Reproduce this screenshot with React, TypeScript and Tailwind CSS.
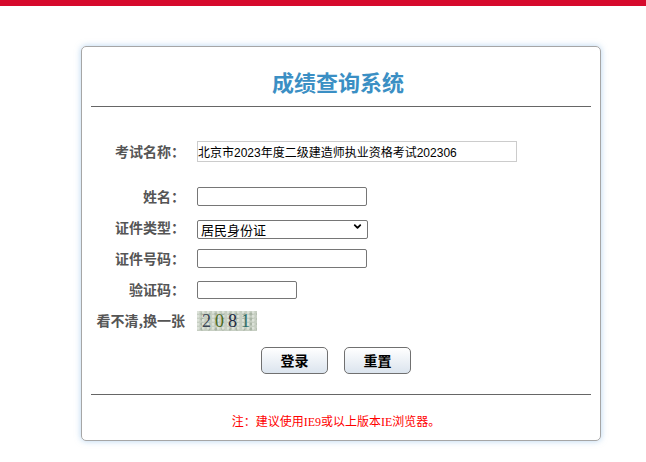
import { ChevronDown } from "lucide-react";

const labelCls = "w-[94px] shrink-0 text-right text-[14px] font-bold text-[#555]";

const Row = ({
  label,
  children,
}: {
  label: string;
  children: React.ReactNode;
}) => (
  <div className="flex h-[31px] items-center">
    <div className={labelCls}>{label}</div>
    <div className="ml-[12px] flex items-center">{children}</div>
  </div>
);

const Captcha = () => (
  <div
    className="flex h-[20px] w-[60px] items-center justify-center bg-[#c6cec2] pl-[2px] text-[18px] leading-none tracking-[4px]"
    style={{
      fontFamily: '"Liberation Serif", serif',
      backgroundImage:
        "radial-gradient(circle at 20% 30%, #dce2d9 1px, transparent 2px), radial-gradient(circle at 70% 60%, #a9b4a5 1px, transparent 2px)",
      backgroundSize: "5px 4px, 7px 5px",
    }}
  >
    <span className="text-[#3a4654]">2</span>
    <span className="text-[#4f6a1e]">0</span>
    <span className="text-[#1e2a44]">8</span>
    <span className="text-[#2b6e6a]">1</span>
  </div>
);

const Btn = ({ text }: { text: string }) => (
  <button className="h-[27px] w-[67px] rounded-[5px] border border-[#707070] bg-gradient-to-b from-white to-[#dbe4ee] text-[14px] font-bold text-black">
    {text}
  </button>
);

export default function App() {
  return (
    <div
      className="min-h-[462px] w-full bg-white"
      style={{ fontFamily: '"Noto Sans CJK SC", "Liberation Sans", sans-serif' }}
    >
      <div className="h-[6px] w-full bg-[#d60a2c]" />
      <div className="ml-[81px] mt-[40px] h-[395px] w-[520px] rounded-[5px] border border-[#a6a6a6] shadow-[0_0_6px_rgba(120,175,225,0.55)]">
        <h1 className="pr-[6px] pt-[19px] text-center text-[22px] font-bold leading-[30px] text-[#3b8fc4]">
          成绩查询系统
        </h1>
        <div className="mx-[9px] mt-[10px] h-px bg-[#666]" />

        <div className="ml-[9px] mt-[29px]">
          <Row label="考试名称：">
            <input
              readOnly
              value="北京市2023年度二级建造师执业资格考试202306"
              className="h-[21px] w-[320px] border border-[#cccccc] px-0 text-[12px] text-black outline-none"
              style={{ fontFamily: '"Liberation Sans", "Noto Sans CJK SC", sans-serif' }}
            />
          </Row>
          <div className="h-[14px]" />
          <Row label="姓名：">
            <input className="h-[19px] w-[170px] rounded-[2px] border border-[#767676] outline-none" />
          </Row>
          <Row label="证件类型：">
            <div className="relative">
              <select className="h-[19px] w-[171px] appearance-none rounded-[2px] border border-[#767676] pl-[3px] text-[13px] leading-[17px] text-black outline-none">
                <option>居民身份证</option>
              </select>
              <ChevronDown
                className="pointer-events-none absolute right-[5px] top-[5px] h-[11px] w-[11px] text-black"
                strokeWidth={4}
              />
            </div>
          </Row>
          <Row label="证件号码：">
            <input className="h-[19px] w-[170px] rounded-[2px] border border-[#767676] outline-none" />
          </Row>
          <Row label="验证码：">
            <input className="h-[18px] w-[100px] rounded-[2px] border border-[#767676] outline-none" />
          </Row>
          <Row label="看不清,换一张">
            <Captcha />
          </Row>
        </div>

        <div className="mt-[9px] flex h-[31px] items-center justify-center gap-[16px] pr-[10px]">
          <Btn text="登录" />
          <Btn text="重置" />
        </div>

        <div className="mx-[9px] mt-[18px] h-px bg-[#666]" />

        <p
          className="mt-[19px] pr-[10px] text-center text-[12px] leading-[16px] text-[#ff0000]"
          style={{ fontFamily: '"Liberation Serif", "Noto Sans CJK SC", serif' }}
        >
          注：建议使用IE9或以上版本IE浏览器。
        </p>
      </div>
    </div>
  );
}
